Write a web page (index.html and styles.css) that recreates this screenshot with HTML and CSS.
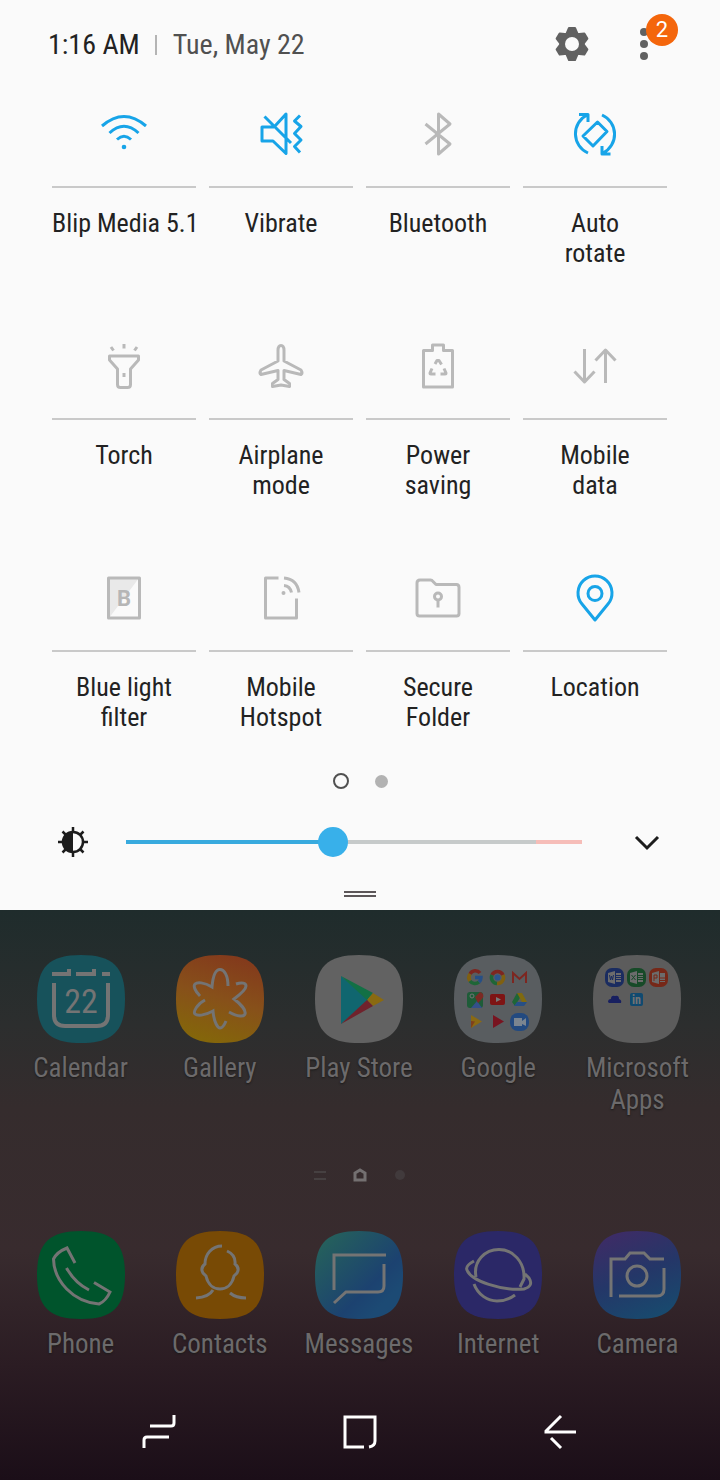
FILE: index.html
```
<!DOCTYPE html>
<html lang="en">
<head>
  <meta charset="UTF-8" />
  <meta name="viewport" content="width=device-width, initial-scale=1.0" />
  <title>Quick settings</title>
  <link rel="stylesheet" href="styles.css">
</head>
<body>
  <section class="panel">
    <header class="panel-header">
      <span class="time">1:16 AM</span>
      <span class="date">Tue, May 22</span>
      <div class="header-actions">
        <button class="icon-btn" aria-label="Settings">
          <svg width="42" height="42" viewBox="-21 -20 42 42" fill="#616161" stroke="#616161" stroke-linejoin="round">
            <circle r="12"/>
            <g stroke-width="2">
              <path d="M-6-9L-3-16H3L6-9ZM-6 9L-3 16H3L6 9Z"/>
              <path transform="rotate(60)" d="M-6-9L-3-16H3L6-9ZM-6 9L-3 16H3L6 9Z"/>
              <path transform="rotate(120)" d="M-6-9L-3-16H3L6-9ZM-6 9L-3 16H3L6 9Z"/>
            </g>
            <circle r="7" fill="#fafafa" stroke="none"/>
          </svg>
        </button>
        <button class="icon-btn" aria-label="More options">
          <svg width="42" height="42" viewBox="0 0 42 42" fill="#616161">
            <circle cx="21" cy="8" r="4"/><circle cx="21" cy="20" r="4"/><circle cx="21" cy="32" r="4"/>
          </svg>
          <span class="badge">2</span>
        </button>
      </div>
    </header>

    <div class="tiles">
      <button class="tile on">
        <span class="tile-icon">
          <svg viewBox="0 0 48 48"><path d="M2 16Q24-3 46 16M9.500 23Q24 9.500 38.500 23M17 29.500Q24 23 31 29.500"/><circle cx="24" cy="37" r="2.300" class="solid"/></svg>
        </span>
        <span class="tile-label">Blip Media 5.1</span>
      </button>
      <button class="tile on">
        <span class="tile-icon">
          <svg viewBox="0 0 48 48"><path d="M17 17H5v14h11l13 12.500V4L18 16M7.500 6.500L34 33M43 5.500L37.500 11 44 16.500 37.500 23.500 44 30 37.500 36.500 43 42.500"/></svg>
        </span>
        <span class="tile-label">Vibrate</span>
      </button>
      <button class="tile">
        <span class="tile-icon">
          <svg viewBox="0 0 48 48"><path d="M11.500 14L36 34 24.500 44V4L36 14 11.500 34"/></svg>
        </span>
        <span class="tile-label">Bluetooth</span>
      </button>
      <button class="tile on">
        <span class="tile-icon">
          <svg viewBox="0 0 48 48"><path d="M17 43A21 21 0 0 1 16 5M8 4.500H17V12M31 5A21 21 0 0 1 32 43M31 36V44H39.500M26.500 12L36 21.500 22 36 12 26Z"/></svg>
        </span>
        <span class="tile-label">Auto<br>rotate</span>
      </button>

      <button class="tile">
        <span class="tile-icon">
          <svg viewBox="0 0 48 48"><path d="M9.500 14H38.500V18L30.500 27V42.500Q30.500 45.500 27.500 45.500H20.500Q17.500 45.500 17.500 42.500V27L9.500 18ZM11 5L13.500 8.500M24 2V6.500M37 5L34.500 8.500M24 31V35"/></svg>
        </span>
        <span class="tile-label">Torch</span>
      </button>
      <button class="tile">
        <span class="tile-icon">
          <svg viewBox="0 0 48 48"><path d="M24 3.500c-2 0-3 2-3 5V19L4 28Q2 31 4 32.500L21 28.500V37.500L15.500 41.500V44.500L24 43 32.500 44.500V41.500L27 37.500V28.500L44 32.500Q46 31 44 28L27 19V8.500c0-3-1-5-3-5z"/></svg>
        </span>
        <span class="tile-label">Airplane<br>mode</span>
      </button>
      <button class="tile">
        <span class="tile-icon">
          <svg viewBox="0 0 48 48"><path d="M9.500 8.500H18.500V3H29.500V8.500H38.500V45H9.500ZM21 22L23 18.500H25L27.500 22.500M18 26.500L16 31Q16 32 17 32H21.500M30 26.500L32 31Q32 32 31 32H26.500"/></svg>
        </span>
        <span class="tile-label">Power<br>saving</span>
      </button>
      <button class="tile">
        <span class="tile-icon">
          <svg viewBox="0 0 48 48"><path d="M13.500 7V40M3.500 29.500L13.500 40 23.500 29.500M34.500 41V8M24.500 18.500L34.500 8 44.500 18.500"/></svg>
        </span>
        <span class="tile-label">Mobile<br>data</span>
      </button>

      <button class="tile">
        <span class="tile-icon">
          <svg viewBox="0 0 48 48"><path class="shade" d="M9 4H39L9 44Z"/><path d="M8.500 4H39.500V44H8.500Z"/><text x="24" y="32">B</text></svg>
        </span>
        <span class="tile-label">Blue light<br>filter</span>
      </button>
      <button class="tile">
        <span class="tile-icon">
          <svg viewBox="0 0 48 48"><path d="M21.500 4H8.500V44H39.500V24.500M27 4Q40 5 42 18.500M27 11.500Q33 12 34.500 18.500"/><circle cx="26.500" cy="19" r="2" class="solid"/></svg>
        </span>
        <span class="tile-label">Mobile<br>Hotspot</span>
      </button>
      <button class="tile">
        <span class="tile-icon">
          <svg viewBox="0 0 48 48"><path d="M6 6H16.500Q18 6 19 7.500L22 10.500H42.500Q45 10.500 45 13.500V39.500Q45 42 42.500 42H5.500Q3 42 3 39.500V9Q3 6 6 6ZM24 26V33.500"/><circle cx="24" cy="22.500" r="3.500"/></svg>
        </span>
        <span class="tile-label">Secure<br>Folder</span>
      </button>
      <button class="tile on">
        <span class="tile-icon">
          <svg viewBox="0 0 48 48"><path d="M24 46L11 30A17 17 0 1 1 37 30Z"/><circle cx="24" cy="19.500" r="7"/></svg>
        </span>
        <span class="tile-label">Location</span>
      </button>
    </div>

    <div class="pages">
      <span class="page current"></span>
      <span class="page"></span>
    </div>

    <div class="brightness">
      <svg width="42" height="42" viewBox="0 0 42 42" fill="none" stroke="#1c1c1c" stroke-width="2.500">
        <circle cx="21" cy="21" r="10"/>
        <path fill="#1c1c1c" stroke="none" d="M21 11A10 10 0 0 0 21 31Z"/>
        <path d="M21 6V11M21 31V36M6 21H11M31 21H36M10.500 10.500L14 14M28 28L31.500 31.500M31.500 10.500L28 14M14 28L10.500 31.500"/>
      </svg>
      <input type="range" min="0" max="100" value="45" aria-label="Brightness">
      <button class="icon-btn" aria-label="Brightness options">
        <svg width="42" height="42" viewBox="0 0 42 42" fill="none" stroke="#1c1c1c" stroke-width="3"><path d="M10 16L21 27 32 16"/></svg>
      </button>
    </div>

    <div class="handle"></div>
  </section>

  <main class="home">
    <div class="apps">
      <a class="app" href="#">
        <svg class="app-icon" viewBox="0 0 88 88">
          <path class="base" fill="#17525b" d="M44 0C76 0 88 12 88 44S76 88 44 88 0 76 0 44 12 0 44 0Z"/>
          <path stroke-width="4" d="M15 19H32V14M39 19H57V14M65 19H73M17 28V60Q17 71 28 71H60Q71 71 71 60V28"/>
          <text x="44" y="58">22</text>
        </svg>
        <span class="app-label">Calendar</span>
      </a>
      <a class="app" href="#">
        <svg class="app-icon" viewBox="0 0 88 88">
          <defs><linearGradient id="gallery" x1=".7" y1="0" x2=".4" y2="1"><stop offset="0" stop-color="#83391c"/><stop offset=".5" stop-color="#87501a"/><stop offset="1" stop-color="#84660a"/></linearGradient></defs>
          <path class="base" fill="url(#gallery)" d="M44 0C76 0 88 12 88 44S76 88 44 88 0 76 0 44 12 0 44 0Z"/>
          <path d="M52 31C52 20 48 14.500 44 14.500S37 20 36 32C28 27 21 27 19 29S19 36 24 41M60 29C66 27 70 28 70 31S66 38 58 44C66 50 70 56 69 59S62 62 53 57M50 66C48 71 46 73 44 73S38 68 37 56C28 61 21 61 19 59S21 49 29 45"/>
        </svg>
        <span class="app-label">Gallery</span>
      </a>
      <a class="app" href="#">
        <svg class="app-icon" viewBox="0 0 88 88">
          <path class="base" fill="#626262" d="M44 0C76 0 88 12 88 44S76 88 44 88 0 76 0 44 12 0 44 0Z"/>
          <path class="base" fill="#10666f" d="M26 21L54 45 26 69Z"/>
          <path class="base" fill="#127045" d="M26 21L58 38 52 45Z"/>
          <path class="base" fill="#8a6a10" d="M58 38L69 45 58 51 52 45Z"/>
          <path class="base" fill="#70222c" d="M26 69L58 51 52 45Z"/>
        </svg>
        <span class="app-label">Play Store</span>
      </a>
      <a class="app" href="#">
        <svg class="app-icon" viewBox="0 0 88 88">
          <path class="base" fill="#595d60" d="M44 0C76 0 88 12 88 44S76 88 44 88 0 76 0 44 12 0 44 0Z"/>
          <g fill="none" stroke-width="3.500">
            <path stroke="#7d2620" d="M16 19A6 6 0 0 1 26 18"/><path stroke="#806010" d="M16 19A6 6 0 0 0 16 26"/><path stroke="#1e6636" d="M16 26A6 6 0 0 0 25 27"/><path stroke="#274f85" d="M25 27A6 6 0 0 0 27 22.500H21"/>
            <path stroke="#7d2620" d="M38 20A6 6 0 0 1 49 20"/><path stroke="#1e6636" d="M38 20A6 6 0 0 0 43 28.500"/><path stroke="#806010" d="M43 28.500A6 6 0 0 0 49 20"/>
            <path stroke="#7d2620" stroke-width="2" d="M59 28V18L65.500 24 72 18V28"/>
          </g>
          <circle class="base" cx="43.500" cy="22.500" r="3" fill="#2c548c"/>
          <rect class="base" x="13" y="37" width="16" height="16" rx="3" fill="#1e5c38"/><path class="base" fill="#34508a" d="M17 53L23 46 28 53Z"/><path class="base" fill="#7c2a24" d="M26 37A4 4 0 0 1 28 44L24 48 21 42Z"/><circle cx="18" cy="41" r="2" stroke-width="1"/>
          <rect class="base" x="36" y="39" width="15" height="11" rx="2" fill="#7e1414"/><path class="base" fill="#777" d="M42 42L47 44.500 42 47Z"/>
          <path class="base" fill="#1e6636" d="M63 38L58 47 61 51 67 41Z"/><path class="base" fill="#806a10" d="M63 38H68L73 47H68Z"/><path class="base" fill="#274f85" d="M63 47H73L70 51H60Z"/>
          <path class="base" fill="#8a6a14" d="M17 60L28 66.500 17 73Z"/><path class="base" fill="#80401c" d="M17 66L21 66.500 17 73Z"/>
          <path class="base" fill="#781420" d="M39 60L50 66.500 39 73Z"/>
          <rect class="base" x="56" y="58" width="19" height="18" rx="8" fill="#234a80"/><path class="base" fill="#7b8590" d="M60 63H68V66L72 63V71L68 69V71H60Z"/>
        </svg>
        <span class="app-label">Google</span>
      </a>
      <a class="app" href="#">
        <svg class="app-icon" viewBox="0 0 88 88">
          <path class="base" fill="#5c5c5c" d="M44 0C76 0 88 12 88 44S76 88 44 88 0 76 0 44 12 0 44 0Z"/>
          <rect class="base" x="12" y="13" width="19" height="19" rx="7" fill="#1a2c60"/>
          <rect class="base" x="34" y="13" width="19" height="19" rx="7" fill="#174a28"/>
          <rect class="base" x="56" y="13" width="19" height="19" rx="7" fill="#762818"/>
          <path class="base" fill="#6c6c6c" d="M15 18L22 16V29L15 27ZM23 18H28V27H23ZM37 18L44 16V29L37 27ZM45 18H50V27H45ZM59 18L66 16V29L59 27ZM67 18H72V27H67Z"/>
          <path stroke="#1a2c60" stroke-width="1" d="M16.500 20L17.500 25 18.500 21 19.500 25 20.500 20M23 20.500H28M23 22.500H28M23 24.500H28"/>
          <path stroke="#174a28" stroke-width="1" d="M38.500 20L42.500 25M42.500 20L38.500 25M45 20.500H50M45 22.500H50M45 24.500H50"/>
          <path stroke="#762818" stroke-width="1" d="M61 26V20H64V23H61M67 23H72M67 25.500H72"/>
          <path class="base" fill="#182060" d="M15 47Q15 44 18 44 18 40 22 41 26 40 26 44 29 45 28 48H16Z"/>
          <rect class="base" x="37" y="38" width="13" height="13" rx="2" fill="#104a70"/>
          <text class="linkedin" x="43.500" y="49">in</text>
        </svg>
        <span class="app-label">Microsoft<br>Apps</span>
      </a>
    </div>

    <div class="home-pages">
      <svg width="16" height="16" viewBox="0 0 16 16" fill="none" stroke="#464041" stroke-width="2"><path d="M2 5H14M2 12H14"/></svg>
      <svg width="16" height="16" viewBox="0 0 16 16" fill="none" stroke="#747071" stroke-width="3"><path d="M3 13V6L8 3 13 6V13Z"/></svg>
      <svg width="16" height="16" viewBox="0 0 16 16" fill="#413a3c"><circle cx="8" cy="8" r="5"/></svg>
    </div>

    <div class="apps">
      <a class="app" href="#">
        <svg class="app-icon" viewBox="0 0 88 88">
          <path class="base" fill="#00542c" d="M44 0C76 0 88 12 88 44S76 88 44 88 0 76 0 44 12 0 44 0Z"/>
          <path d="M38 32L30 17Q20 21 16.500 28C17 50 36 71 62 73Q69 70 73 61L57 51.500M29.500 37Q38 52 52 59"/>
        </svg>
        <span class="app-label">Phone</span>
      </a>
      <a class="app" href="#">
        <svg class="app-icon" viewBox="0 0 88 88">
          <path class="base" fill="#784a05" d="M44 0C76 0 88 12 88 44S76 88 44 88 0 76 0 44 12 0 44 0Z"/>
          <path d="M46 15C36 15 29 23 29 33Q24 37 27 42L30 45C32 54 38 58 44 58S56 54 58 45L61 42Q64 37 59 33Q60 24 51 20M20 67Q33 66 37 59M54 62Q60 67 70 67"/>
        </svg>
        <span class="app-label">Contacts</span>
      </a>
      <a class="app" href="#">
        <svg class="app-icon" viewBox="0 0 88 88">
          <defs><linearGradient id="messages" x1=".1" y1=".1" x2=".8" y2=".8"><stop offset="0" stop-color="#25605c"/><stop offset=".75" stop-color="#1c4270"/><stop offset="1" stop-color="#1c4a74"/></linearGradient></defs>
          <path class="base" fill="url(#messages)" d="M44 0C76 0 88 12 88 44S76 88 44 88 0 76 0 44 12 0 44 0Z"/>
          <path d="M19 59V24H71M69 33V55Q69 61 63 61H31L19 72"/>
        </svg>
        <span class="app-label">Messages</span>
      </a>
      <a class="app" href="#">
        <svg class="app-icon" viewBox="0 0 88 88">
          <path class="base" fill="#2b2867" d="M44 0C76 0 88 12 88 44S76 88 44 88 0 76 0 44 12 0 44 0Z"/>
          <path d="M22 46C19 30 31 18.500 45 18.500S71 31 70 48L66 56M20 30Q11 35 13 39C17 50 48 60 70 58Q80 55 75 47L71 43M20 53C24 64 34 70 43 70Q53 70 61 64"/>
        </svg>
        <span class="app-label">Internet</span>
      </a>
      <a class="app" href="#">
        <svg class="app-icon" viewBox="0 0 88 88">
          <defs><linearGradient id="camera" x1=".3" y1="0" x2=".7" y2="1"><stop offset="0" stop-color="#3d2c66"/><stop offset=".5" stop-color="#243768"/><stop offset="1" stop-color="#184a6e"/></linearGradient></defs>
          <path class="base" fill="url(#camera)" d="M44 0C76 0 88 12 88 44S76 88 44 88 0 76 0 44 12 0 44 0Z"/>
          <path d="M18 66V28H32L37 22H51L57 28H71M71 37V58Q71 65 64 65H26"/><circle cx="44" cy="45" r="10"/>
        </svg>
        <span class="app-label">Camera</span>
      </a>
    </div>

    <nav class="navbar">
      <button class="icon-btn" aria-label="Recent apps">
        <svg width="42" height="42" viewBox="0 0 42 42"><path d="M36 4V12Q36 15 33 15H12M6 37V29Q6 26 9 26H31"/></svg>
      </button>
      <button class="icon-btn" aria-label="Home">
        <svg width="42" height="42" viewBox="0 0 42 42"><path d="M25 36H6V6H36V30Q36 35 30 36"/></svg>
      </button>
      <button class="icon-btn" aria-label="Back">
        <svg width="42" height="42" viewBox="0 0 42 42"><path d="M21 5L6 20V21H36M11 27L21 37"/></svg>
      </button>
    </nav>
  </main>
</body>
</html>
```
FILE: styles.css
```
* {
  box-sizing: border-box;
}

body {
  margin: 0;
  min-height: 100vh;
  display: flex;
  flex-direction: column;
  font-family: 'Roboto Condensed', 'Liberation Sans Narrow', Roboto, sans-serif;
  font-size: 26px;
  line-height: 30px;
  color: #222;
  background-color: #1a0e17;
}

button {
  margin: 0;
  padding: 0;
  border: 0;
  background: none;
  font: inherit;
  color: inherit;
}

svg {
  display: block;
}

.icon-btn {
  position: relative;
  width: 42px;
  height: 42px;
}

.panel {
  background-color: #fafafa;
}

.panel-header {
  display: flex;
  align-items: center;
  height: 82px;
  padding: 8px 55px 0 48px;
  font-size: 28px;
}

.date {
  margin-left: 15px;
  color: #505050;
  display: flex;
  align-items: center;
  gap: 16px;
}

.date::before {
  content: "";
  width: 2px;
  height: 20px;
  background-color: #b4b4b4;
}

.header-actions {
  display: flex;
  gap: 30px;
  margin-left: auto;
}

.badge {
  position: absolute;
  top: -10px;
  left: 23px;
  width: 32px;
  height: 32px;
  border-radius: 50%;
  background-color: #f4660c;
  color: #fff;
  font-family: Roboto, sans-serif;
  font-size: 22px;
  line-height: 32px;
  text-align: center;
}

/* quick setting tiles */
.tiles {
  display: grid;
  grid-template-columns: repeat(4, 1fr);
  gap: 46px 13px;
  padding: 0 53px 0 52px;
}

.tile {
  display: flex;
  flex-direction: column;
  min-width: 0;
  min-height: 186px;
}

.tile-icon {
  display: flex;
  align-items: center;
  justify-content: center;
  width: 100%;
  height: 106px;
  border-bottom: 2px solid #c9c9c9;
}

.tile-icon svg {
  width: 48px;
  height: 48px;
  overflow: visible;
  fill: none;
  stroke: #b9b9b9;
  stroke-width: 3;
  stroke-linejoin: round;
}

.tile.on svg {
  stroke: #17a4e8;
}

.tile-icon .solid {
  fill: #b9b9b9;
  stroke: none;
}

.tile.on .solid {
  fill: #17a4e8;
}

.tile-icon .shade {
  fill: #e9e9e9;
  stroke: none;
}

.tile-icon text {
  fill: #b6b6b6;
  stroke: none;
  font-family: Roboto, sans-serif;
  font-size: 22px;
  font-weight: 700;
  text-anchor: middle;
}

.tile-label {
  width: 100%;
  margin-top: 20px;
  text-align: center;
  white-space: nowrap;
}

.pages {
  display: flex;
  justify-content: center;
  align-items: center;
  gap: 26px;
  height: 98px;
}

.page {
  width: 13px;
  height: 13px;
  border-radius: 50%;
  background-color: #b2b2b2;
}

.page.current {
  width: 16px;
  height: 16px;
  border: 2px solid #505050;
  background: none;
}

.brightness {
  display: flex;
  align-items: center;
  height: 42px;
  margin-top: -9px;
  padding: 0 52px;
}

.brightness input {
  flex: 1;
  height: 30px;
  margin: 0 44px 0 32px;
  appearance: none;
  background: none;
}

.brightness input::-webkit-slider-runnable-track {
  height: 4px;
  background: linear-gradient(to right, #38aade 45%, #c6caca 45% 90%, #f6bdb8 90%);
}

.brightness input::-webkit-slider-thumb {
  appearance: none;
  width: 30px;
  height: 30px;
  margin-top: -13px;
  border-radius: 50%;
  background-color: #38b0ea;
}

.handle {
  width: 32px;
  height: 6px;
  margin: 28px auto 13px;
  border-top: 2px solid #5c5658;
  border-bottom: 2px solid #5c5658;
}

/* dimmed home screen */
.home {
  flex: 1;
  display: flex;
  flex-direction: column;
  padding-top: 45px;
  color: #6c6a6b;
  background: linear-gradient(#1f2c2c 0%, #2c2e2e 20%, #352c2d 35%, #382b2e 60%, #2b1c23 80%, #1b0e18 100%);
}

.apps {
  display: grid;
  grid-template-columns: repeat(5, 1fr);
  padding: 0 13px 0 11px;
}

.app {
  display: flex;
  flex-direction: column;
  align-items: center;
  gap: 9px;
  color: inherit;
  text-decoration: none;
}

.app-icon {
  width: 88px;
  height: 88px;
  fill: none;
  stroke: #747474;
  stroke-width: 3;
}

.app-icon .base {
  stroke: none;
}

.app-icon text {
  fill: #747474;
  stroke: none;
  font-size: 34px;
  text-anchor: middle;
}

.app-icon .linkedin {
  font-size: 12px;
  font-weight: 700;
}

.app-label {
  font-size: 27px;
  line-height: 32px;
  text-align: center;
  text-shadow: 0 1px 2px #1a1a1a;
}

.home-pages {
  display: flex;
  justify-content: center;
  gap: 24px;
  margin: 51px 0 48px;
}

.navbar {
  display: grid;
  grid-template-columns: repeat(3, 1fr);
  place-items: center;
  height: 96px;
  margin-top: 24px;
  padding: 0 58px;
}

.navbar svg {
  fill: none;
  stroke: #fff;
  stroke-width: 3;
}
```
